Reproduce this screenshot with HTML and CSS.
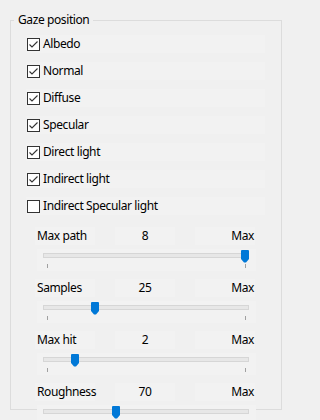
FILE: index.html
```html
<!DOCTYPE html>
<html>
<head>
<meta charset="utf-8">
<link rel="stylesheet" href="styles.css">
</head>
<body>
<div class="group">
  <span class="legend">Gaze position</span>
  <div class="checks">
    <div class="check"><span class="box"><svg viewBox="0 0 11 11" width="11" height="11"><polyline points="1.5,5.5 4,8 9.5,2.5" /></svg></span><span class="text">Albedo</span></div>
    <div class="check"><span class="box"><svg viewBox="0 0 11 11" width="11" height="11"><polyline points="1.5,5.5 4,8 9.5,2.5" /></svg></span><span class="text">Normal</span></div>
    <div class="check"><span class="box"><svg viewBox="0 0 11 11" width="11" height="11"><polyline points="1.5,5.5 4,8 9.5,2.5" /></svg></span><span class="text">Diffuse</span></div>
    <div class="check"><span class="box"><svg viewBox="0 0 11 11" width="11" height="11"><polyline points="1.5,5.5 4,8 9.5,2.5" /></svg></span><span class="text">Specular</span></div>
    <div class="check"><span class="box"><svg viewBox="0 0 11 11" width="11" height="11"><polyline points="1.5,5.5 4,8 9.5,2.5" /></svg></span><span class="text">Direct light</span></div>
    <div class="check"><span class="box"><svg viewBox="0 0 11 11" width="11" height="11"><polyline points="1.5,5.5 4,8 9.5,2.5" /></svg></span><span class="text">Indirect light</span></div>
    <div class="check"><span class="box"></span><span class="text">Indirect Specular light</span></div>
  </div>
  <div class="sliders">
    <div class="slider-block">
      <div class="slider-labels"><span class="lbl name">Max path</span><span class="lbl value">8</span><span class="lbl max">Max</span></div>
      <div class="slider">
        <div class="track"></div>
        <svg class="thumb" style="left:204px" viewBox="0 0 8 13" width="8" height="13"><path d="M1 0H7Q8 0 8 1V9L5 12.5H3L0 9V1Q0 0 1 0Z"/></svg>
        <div class="ticks"><i></i><i></i></div>
      </div>
    </div>
    <div class="slider-block">
      <div class="slider-labels"><span class="lbl name">Samples</span><span class="lbl value">25</span><span class="lbl max">Max</span></div>
      <div class="slider">
        <div class="track"></div>
        <svg class="thumb" style="left:54px" viewBox="0 0 8 13" width="8" height="13"><path d="M1 0H7Q8 0 8 1V9L5 12.5H3L0 9V1Q0 0 1 0Z"/></svg>
        <div class="ticks"><i></i><i></i></div>
      </div>
    </div>
    <div class="slider-block">
      <div class="slider-labels"><span class="lbl name">Max hit</span><span class="lbl value">2</span><span class="lbl max">Max</span></div>
      <div class="slider">
        <div class="track"></div>
        <svg class="thumb" style="left:34px" viewBox="0 0 8 13" width="8" height="13"><path d="M1 0H7Q8 0 8 1V9L5 12.5H3L0 9V1Q0 0 1 0Z"/></svg>
        <div class="ticks"><i></i><i></i></div>
      </div>
    </div>
    <div class="slider-block">
      <div class="slider-labels"><span class="lbl name">Roughness</span><span class="lbl value">70</span><span class="lbl max">Max</span></div>
      <div class="slider">
        <div class="track"></div>
        <svg class="thumb" style="left:75px" viewBox="0 0 8 13" width="8" height="13"><path d="M1 0H7Q8 0 8 1V9L5 12.5H3L0 9V1Q0 0 1 0Z"/></svg>
        <div class="ticks"><i></i><i></i></div>
      </div>
    </div>
  </div>
</div>
</body>
</html>
```
FILE: styles.css
```css
html, body {
  margin: 0;
  padding: 0;
  background: #f0f0f0;
  width: 290px;
  height: 420px;
  overflow: hidden;
}
body {
  font-family: "Noto Sans", "Liberation Sans", sans-serif;
  font-size: 12px;
  letter-spacing: -0.4px;
  color: #000;
}
.group {
  position: relative;
  margin: 20px 0 0 10px;
  width: 270px;
  height: 388px;
  border: 1px solid #dcdcdc;
}
.legend {
  position: absolute;
  left: 3px;
  top: -10px;
  padding: 0 4px;
  line-height: 18px;
  background: #f0f0f0;
}
.checks {
  padding: 14px 0 0 15px;
  display: flex;
  flex-direction: column;
  gap: 9px;
}
.check {
  width: 239px;
  height: 18px;
  display: flex;
  align-items: center;
  background: #f2f2f2;
}
.box {
  box-sizing: border-box;
  width: 13px;
  height: 13px;
  margin-left: 1px;
  border: 1px solid #333;
  background: #fff;
  display: flex;
  align-items: center;
  justify-content: center;
}
.box svg polyline {
  fill: none;
  stroke: #333;
  stroke-width: 1.1;
}
.text {
  margin-left: 3px;
  line-height: 18px;
  white-space: nowrap;
}
.sliders {
  margin-top: 12px;
}
.slider-block {
  margin-bottom: 8px;
}
.slider-labels {
  margin-left: 24px;
  display: grid;
  grid-template-columns: 60px 60px 60px;
  column-gap: 20px;
  height: 18px;
}
.lbl {
  background: #f2f2f2;
  line-height: 18px;
  white-space: nowrap;
}
.name { padding-left: 2px; }
.value { text-align: center; }
.max { text-align: right; padding-right: 1px; }
.slider {
  position: relative;
  margin: 4px 0 0 26px;
  width: 219px;
  height: 22px;
  background: #f2f2f2;
  padding-top: 4px;
  box-sizing: border-box;
}
.track {
  box-sizing: border-box;
  margin-left: 6px;
  width: 206px;
  height: 5px;
  background: #e7e7e7;
  border: 1px solid #d6d6d6;
}
.thumb {
  position: absolute;
  top: 1px;
  fill: #0078d7;
}
.ticks {
  margin: 6px 0 0 10px;
  width: 199px;
  height: 4px;
  display: flex;
  justify-content: space-between;
}
.ticks i {
  display: block;
  width: 1px;
  height: 4px;
  background: #a0a0a0;
}
```
